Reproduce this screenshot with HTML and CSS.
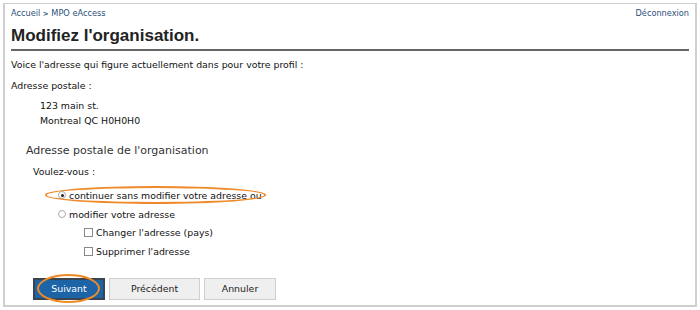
FILE: index.html
```html
<!DOCTYPE html>
<html lang="fr">
<head>
    <meta charset="UTF-8">
    <title>Modifiez l'organisation</title>
    <link rel="stylesheet" href="styles.css">
</head>
<body>
    <div class="page">
        <div class="topbar">
            <div class="crumbs"><a href="#">Accueil</a> <span class="sep">&gt;</span> <a href="#">MPO eAccess</a></div>
            <a href="#" class="logout">Déconnexion</a>
        </div>
        <h1 class="title">Modifiez l'organisation.</h1>

        <p class="intro">Voice l'adresse qui figure actuellement dans pour votre profil :</p>
        <p class="label">Adresse postale :</p>
        <div class="address">
            <div>123 main st.</div>
            <div>Montreal QC H0H0H0</div>
        </div>

        <div class="section">
            <h2 class="section-title">Adresse postale de l'organisation</h2>
            <div class="question">Voulez-vous :</div>
            <div class="options">
                <label class="option">
                    <span class="radio checked"></span>continuer sans modifier votre adresse ou
                    <span class="mark mark-option"></span>
                </label>
                <label class="option">
                    <span class="radio"></span>modifier votre adresse
                </label>
                <div class="suboptions">
                    <label class="option"><span class="check"></span>Changer l'adresse (pays)</label>
                    <label class="option"><span class="check"></span>Supprimer l'adresse</label>
                </div>
            </div>
            <div class="actions">
                <button class="btn btn-primary">Suivant<span class="mark mark-btn"></span></button>
                <button class="btn btn-back">Précédent</button>
                <button class="btn btn-cancel">Annuler</button>
            </div>
        </div>
    </div>
</body>
</html>
```

FILE: styles.css
```css
body {
    margin: 0;
    background: #fff;
    font-family: "DejaVu Sans", Verdana, sans-serif;
    font-size: 9.4px;
    color: #111;
}

.page {
    margin: 3px 0 0 3px;
    width: 686px;
    height: 301px;
    border: 2px solid #cfcfcf;
    border-top-width: 1px;
    padding: 0 0 0 4px;
    box-sizing: content-box;
    position: relative;
}

.topbar {
    display: flex;
    justify-content: space-between;
    padding: 4px 6px 0 2px;
    font-size: 8.2px;
}

.topbar a {
    color: #2a4f7a;
    text-decoration: none;
}

.sep {
    color: #2a4f7a;
    font-size: 7px;
    font-weight: bold;
}

.title {
    margin: 8px 6px 0 2px;
    padding-bottom: 3px;
    border-bottom: 2px solid #666;
    font-family: "Liberation Sans", Arial, sans-serif;
    font-size: 17px;
    font-weight: bold;
    color: #222;
}

.intro {
    margin: 8px 0 0 2px;
}

.label {
    margin: 10px 0 0 2px;
}

.address {
    margin: 7px 0 0 31px;
    line-height: 15px;
}

.section {
    padding-left: 17px;
    margin-top: 16px;
}

.section-title {
    margin: 0;
    font-size: 11px;
    font-weight: normal;
    color: #333;
}

.question {
    margin: 9px 0 0 7px;
}

.options {
    margin: 9px 0 0 32px;
}

.option {
    display: flex;
    align-items: center;
    height: 18.7px;
    position: relative;
    width: max-content;
}

.radio {
    width: 6px;
    height: 6px;
    border: 1px solid #aaa;
    border-radius: 50%;
    margin-right: 3px;
    position: relative;
}

.radio.checked::after {
    content: "";
    position: absolute;
    left: 1.5px;
    top: 1.5px;
    width: 3px;
    height: 3px;
    border-radius: 50%;
    background: #222;
}

.check {
    width: 7px;
    height: 7px;
    border: 1px solid #888;
    background: #fff;
    margin-right: 3px;
}

.suboptions {
    margin-left: 26px;
}

.actions {
    display: flex;
    gap: 4px;
    margin-top: 17px;
    margin-left: 7px;
}

.btn {
    height: 22px;
    padding: 0;
    font-family: "DejaVu Sans", Verdana, sans-serif;
    font-size: 9.4px;
    color: #222;
    background: #efefef;
    border: 1px solid #cfcfcf;
    position: relative;
}

.btn-back {
    width: 91px;
}

.btn-cancel {
    width: 72px;
}

.btn-primary {
    width: 72px;
    color: #fff;
    background: #1d64a6;
    border: 2px solid #3a4550;
}

.mark {
    position: absolute;
    border: 2px solid #ef8a2a;
    border-radius: 50%;
    pointer-events: none;
}

.mark-option {
    left: -13px;
    right: -4px;
    top: 0;
    bottom: 1px;
}

.mark-btn {
    left: 2px;
    right: 3px;
    top: -6px;
    bottom: -5px;
}
```
